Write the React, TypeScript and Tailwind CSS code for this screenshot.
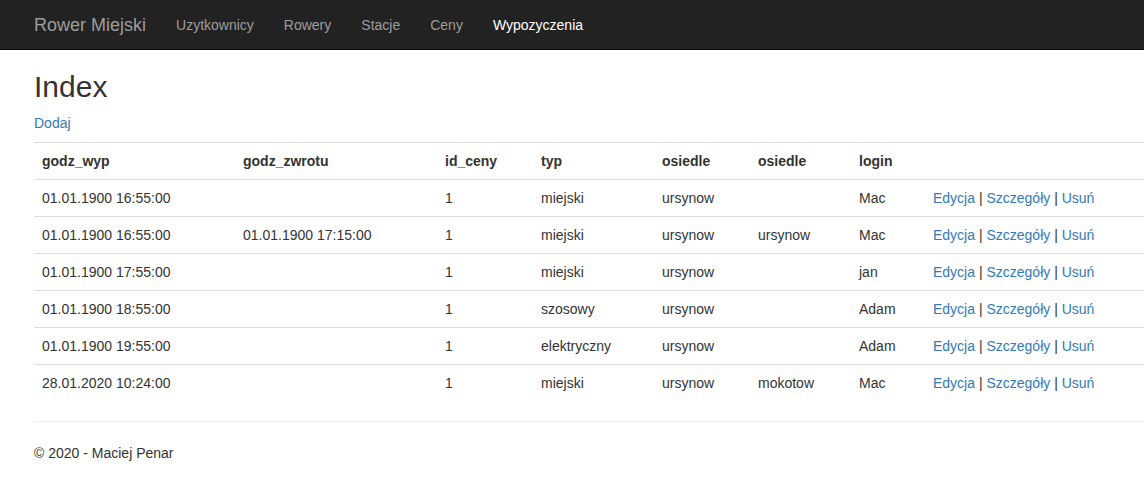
const rows = [
  { wyp: "01.01.1900 16:55:00", zwrot: "", cena: "1", typ: "miejski", os1: "ursynow", os2: "", login: "Mac" },
  { wyp: "01.01.1900 16:55:00", zwrot: "01.01.1900 17:15:00", cena: "1", typ: "miejski", os1: "ursynow", os2: "ursynow", login: "Mac" },
  { wyp: "01.01.1900 17:55:00", zwrot: "", cena: "1", typ: "miejski", os1: "ursynow", os2: "", login: "jan" },
  { wyp: "01.01.1900 18:55:00", zwrot: "", cena: "1", typ: "szosowy", os1: "ursynow", os2: "", login: "Adam" },
  { wyp: "01.01.1900 19:55:00", zwrot: "", cena: "1", typ: "elektryczny", os1: "ursynow", os2: "", login: "Adam" },
  { wyp: "28.01.2020 10:24:00", zwrot: "", cena: "1", typ: "miejski", os1: "ursynow", os2: "mokotow", login: "Mac" },
]

const navLinks = ["Uzytkownicy", "Rowery", "Stacje", "Ceny"]

export default function App() {
  return (
    <div className="w-full min-h-[479px] overflow-hidden bg-white text-[14px] leading-[20px] text-[#333] font-['Liberation_Sans',Arial,sans-serif]">
      <nav className="h-[50px] bg-[#222] border-b border-[#080808]">
        <div className="flex items-center h-[49px] pl-[19px]">
          <a className="px-[15px] text-[18px] text-[#9d9d9d]">Rower Miejski</a>
          {navLinks.map((l) => (
            <a key={l} className="px-[15px] text-[#9d9d9d]">
              {l}
            </a>
          ))}
          <a className="px-[15px] text-white">Wypozyczenia</a>
        </div>
      </nav>

      <div className="pl-[34px]">
        <h2 className="mt-[20px] mb-[10px] text-[30px] leading-[33px] font-normal">Index</h2>
        <p className="mb-[9px]">
          <a className="text-[#337ab7]">Dodaj</a>
        </p>

        <table className="w-[1140px] table-fixed border-collapse mb-[20px]">
          <tbody>
            <tr>
              <th className="w-[201px] p-[8px] text-left font-bold border-t border-[#ddd]">godz_wyp</th>
              <th className="w-[202px] p-[8px] text-left font-bold border-t border-[#ddd]">godz_zwrotu</th>
              <th className="w-[96px] p-[8px] text-left font-bold border-t border-[#ddd]">id_ceny</th>
              <th className="w-[121px] p-[8px] text-left font-bold border-t border-[#ddd]">typ</th>
              <th className="w-[96px] p-[8px] text-left font-bold border-t border-[#ddd]">osiedle</th>
              <th className="w-[101px] p-[8px] text-left font-bold border-t border-[#ddd]">osiedle</th>
              <th className="w-[74px] p-[8px] text-left font-bold border-t border-[#ddd]">login</th>
              <th className="p-[8px] border-t border-[#ddd]"></th>
            </tr>
            {rows.map((r, i) => (
              <tr key={i}>
                <td className="p-[8px] border-t border-[#ddd]">{r.wyp}</td>
                <td className="p-[8px] border-t border-[#ddd]">{r.zwrot}</td>
                <td className="p-[8px] border-t border-[#ddd]">{r.cena}</td>
                <td className="p-[8px] border-t border-[#ddd]">{r.typ}</td>
                <td className="p-[8px] border-t border-[#ddd]">{r.os1}</td>
                <td className="p-[8px] border-t border-[#ddd]">{r.os2}</td>
                <td className="p-[8px] border-t border-[#ddd]">{r.login}</td>
                <td className="p-[8px] border-t border-[#ddd] whitespace-nowrap">
                  <a className="text-[#337ab7]">Edycja</a> | <a className="text-[#337ab7]">Szczegóły</a> |{" "}
                  <a className="text-[#337ab7]">Usuń</a>
                </td>
              </tr>
            ))}
          </tbody>
        </table>

        <hr className="w-[1140px] border-t border-[#eee]" />
        <footer>
          <p className="mt-[21px] mb-[20px]">© 2020 - Maciej Penar</p>
        </footer>
      </div>
    </div>
  )
}
